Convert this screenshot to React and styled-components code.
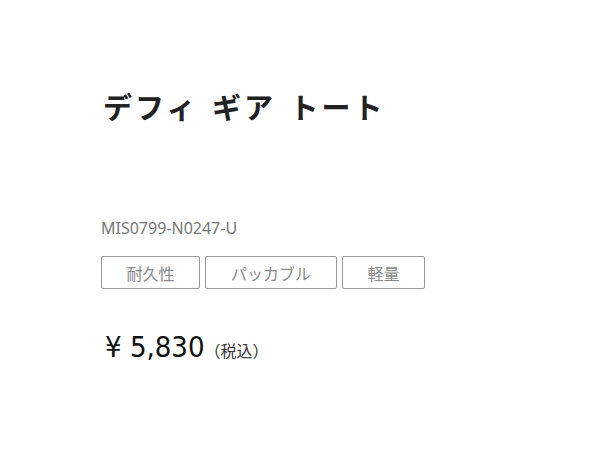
import React from "react";
import styled, { createGlobalStyle } from "styled-components";

const Global = createGlobalStyle`
  html, body { margin: 0; padding: 0; background: #fff; }
  body { font-family: "Noto Sans", "Noto Sans CJK JP", sans-serif; }
`;

const Page = styled.div`
  width: 600px;
  height: 450px;
  box-sizing: border-box;
  padding: 84px 0 0 101px;
  display: flex;
  flex-direction: column;
`;

const Title = styled.h1`
  margin: 0 0 0 2px;
  font-family: "Noto Sans CJK JP", sans-serif;
  font-size: 29px;
  font-weight: 700;
  letter-spacing: 3px;
  word-spacing: 4px;
  line-height: 44px;
  color: #222;
`;

const Sku = styled.div`
  margin-top: 89px;
  font-family: "Noto Sans", "Noto Sans CJK JP", sans-serif;
  font-size: 16px;
  line-height: 22px;
  color: #777;
`;

const Tags = styled.div`
  display: flex;
  gap: 5px;
  margin-top: 17px;
`;

const Tag = styled.span`
  box-sizing: border-box;
  height: 33px;
  width: ${(p) => p.$w}px;
  display: flex;
  align-items: center;
  justify-content: center;
  border: 1px solid #999;
  border-radius: 2px;
  font-family: "Noto Sans CJK JP", sans-serif;
  font-size: 16px;
  color: #888;
`;

const PriceRow = styled.div`
  display: flex;
  align-items: baseline;
  margin-top: 40px;
  margin-left: 4px;
  color: #111;
`;

const Price = styled.span`
  font-family: "DejaVu Sans Condensed", "DejaVu Sans", sans-serif;
  font-stretch: condensed;
  font-size: 29px;
  line-height: 36px;
`;

const Tax = styled.span`
  margin-left: 0;
  font-family: "Noto Sans CJK JP", sans-serif;
  font-size: 16px;
  color: #333;
`;

export default function App() {
  return (
    <>
      <Global />
      <Page>
        <Title>デフィ ギア トート</Title>
        <Sku>MIS0799-N0247-U</Sku>
        <Tags>
          <Tag $w={99}>耐久性</Tag>
          <Tag $w={132}>パッカブル</Tag>
          <Tag $w={83}>軽量</Tag>
        </Tags>
        <PriceRow>
          <Price>¥ 5,830</Price>
          <Tax>（税込）</Tax>
        </PriceRow>
      </Page>
    </>
  );
}
